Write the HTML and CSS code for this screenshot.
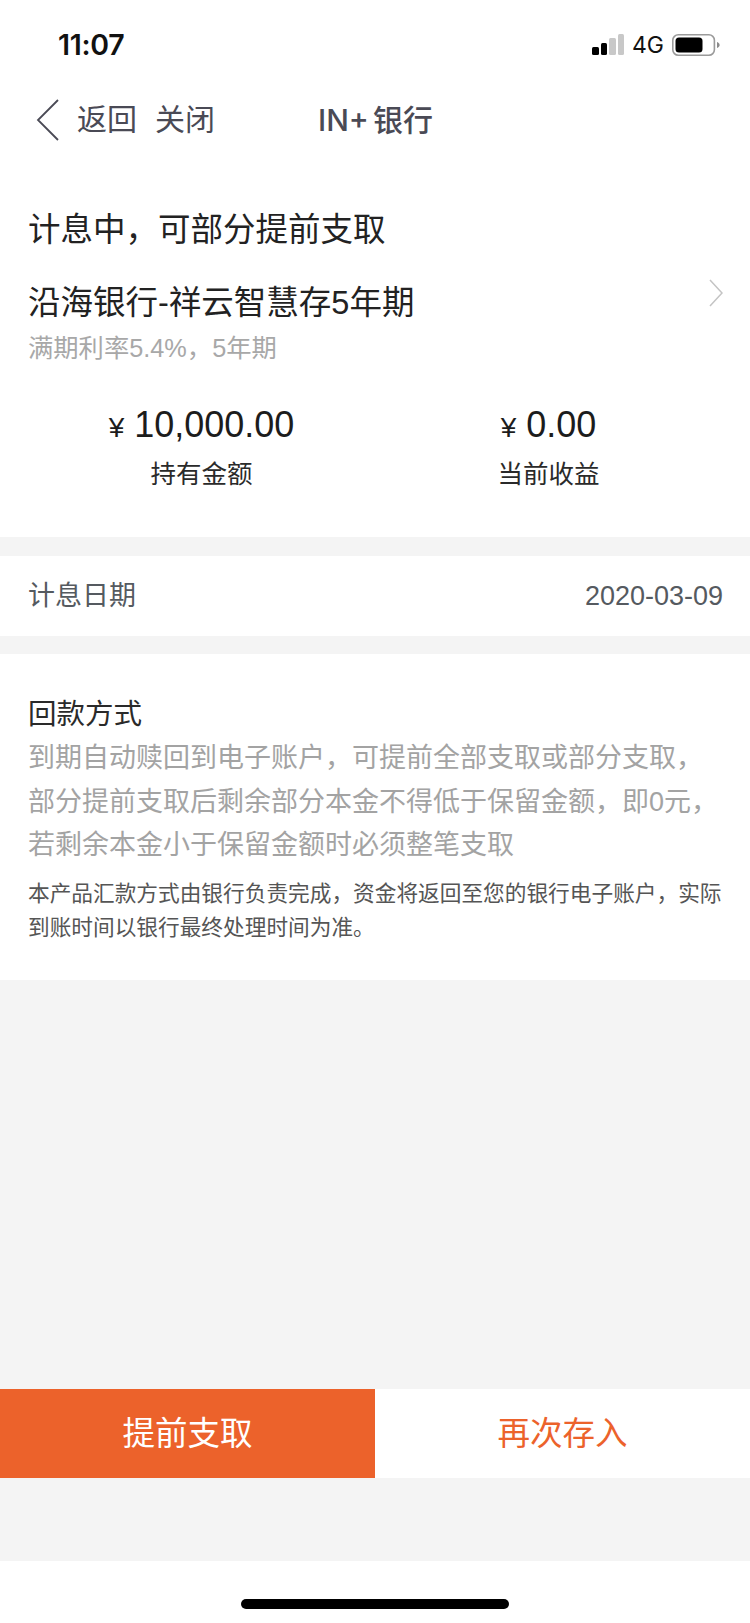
FILE: index.html
```html
<!DOCTYPE html>
<html lang="zh-CN">
<head>
<meta charset="utf-8">
<title>IN+银行</title>
<link rel="stylesheet" href="styles.css">
</head>
<body>
<div class="page">
  <div class="status">
    <span class="time">11:07</span>
    <div class="status-right">
      <div class="bars">
        <i class="bar bar1"></i><i class="bar bar2"></i><i class="bar bar3"></i><i class="bar bar4"></i>
      </div>
      <span class="net">4G</span>
      <svg class="battery" width="48" height="22" viewBox="0 0 48 22">
        <rect x="0.8" y="0.8" width="41.6" height="20.4" rx="5.5" fill="none" stroke="#9a9a9a" stroke-width="1.6"/>
        <rect x="3.5" y="3.500" width="27" height="15" rx="3.500" fill="#000"/>
        <path d="M45 8v6c1.600-.5 2.600-1.700 2.600-3s-1-2.500-2.600-3z" fill="#8a8a8a"/>
      </svg>
    </div>
  </div>
  <div class="nav">
    <svg class="back" width="24" height="44" viewBox="0 0 24 44">
      <path d="M22 2 2 22l20 20" fill="none" stroke="#4a4a55" stroke-width="1.800"/>
    </svg>
    <span class="nav-link">返回</span>
    <span class="nav-link nav-close">关闭</span>
    <span class="nav-title">IN+ 银行</span>
  </div>
  <section class="card">
    <h1 class="status-title">计息中，可部分提前支取</h1>
    <div class="name-row">
      <h2 class="name">沿海银行-祥云智慧存5年期</h2>
      <svg class="more" width="14" height="28" viewBox="0 0 14 28">
        <path d="M1 1l12 13L1 27" fill="none" stroke="#c4c4c4" stroke-width="1.500"/>
      </svg>
    </div>
    <p class="sub">满期利率5.4%，5年期</p>
    <div class="stats">
      <div class="stat">
        <div class="amount"><span class="yen">¥</span> 10,000.00</div>
        <div class="stat-label">持有金额</div>
      </div>
      <div class="stat">
        <div class="amount"><span class="yen">¥</span> 0.00</div>
        <div class="stat-label">当前收益</div>
      </div>
    </div>
  </section>
  <section class="row">
    <span class="row-label">计息日期</span>
    <span class="row-value">2020-03-09</span>
  </section>
  <section class="repay">
    <h3 class="repay-title">回款方式</h3>
    <p class="repay-text">到期自动赎回到电子账户，可提前全部支取或部分支取，<br>部分提前支取后剩余部分本金不得低于保留金额，即0元，<br>若剩余本金小于保留金额时必须整笔支取</p>
    <p class="repay-note">本产品汇款方式由银行负责完成，资金将返回至您的银行电子账户，实际到账时间以银行最终处理时间为准。</p>
  </section>
  <div class="fill"></div>
  <div class="actions">
    <button class="btn btn-primary">提前支取</button>
    <button class="btn btn-secondary">再次存入</button>
  </div>
  <div class="gap"></div>
  <div class="home"><div class="home-bar"></div></div>
</div>
</body>
</html>
```
FILE: styles.css
```css
* { box-sizing: border-box; }
html, body { margin: 0; padding: 0; }
body {
  background: #f4f4f4;
  font-family: "Liberation Sans", "Noto Sans CJK SC", sans-serif;
  color: #222;
}
h1, h2, h3, p { margin: 0; font-weight: 400; }
.page {
  width: 750px;
  height: 1623px;
  display: flex;
  flex-direction: column;
  overflow: hidden;
}
.status {
  height: 82px;
  background: #fff;
  display: flex;
  justify-content: space-between;
  align-items: flex-start;
  padding: 26px 30px 0 58px;
}
.time {
  font-size: 28.500px;
  line-height: 38px;
  font-weight: 600;
  color: #111;
  font-family: "Inter", "Liberation Sans", sans-serif;
  letter-spacing: -0.3px;
}
.status-right {
  display: flex;
  align-items: flex-start;
  padding-top: 8px;
}
.bars {
  display: flex;
  align-items: flex-end;
  gap: 2px;
  height: 21px;
  width: 32px;
}
.bar { display: block; width: 6.500px; border-radius: 1.500px; }
.bar1 { height: 8px; background: #000; }
.bar2 { height: 12px; background: #000; }
.bar3 { height: 17px; background: #c8c8c8; }
.bar4 { height: 21px; background: #c8c8c8; }
.net {
  margin-left: 8px;
  width: 40px;
  font-size: 23px;
  line-height: 22px;
  color: #111;
  font-family: "Inter", "Liberation Sans", sans-serif;
}
.battery { display: block; }
.nav {
  height: 76px;
  background: #fff;
  display: flex;
  align-items: center;
  padding-left: 36px;
  color: #4a4a55;
}
.back { margin-right: 17px; }
.nav-link { font-size: 30px; line-height: 40px; }
.nav-close { margin-left: 18px; }
.nav-title {
  margin-left: 103px;
  font-family: "Inter", "Noto Sans CJK SC", sans-serif;
  font-size: 30px;
  line-height: 40px;
  font-weight: 500;
  word-spacing: -4px;
}
.card {
  background: #fff;
  padding: 50px 28px 45px;
}
.status-title {
  font-size: 32.500px;
  line-height: 44px;
}
.name-row {
  margin-top: 29px;
  display: flex;
  justify-content: space-between;
  align-items: flex-start;
}
.name {
  font-size: 32.500px;
  line-height: 44px;
}
.more { margin: -2px -1px 0 0; }
.sub {
  margin-top: 6px;
  font-size: 25.300px;
  line-height: 34px;
  color: #a8a8a8;
}
.stats {
  margin-top: 37px;
  display: grid;
  grid-template-columns: 1fr 1fr;
}
.stat { text-align: center; }
.amount {
  font-size: 36px;
  line-height: 46px;
  color: #1c1c1c;
}
.yen { font-size: 28px; }
.stat-label {
  margin-top: 5px;
  font-size: 25.500px;
  line-height: 36px;
  color: #2a2a2a;
}
.row {
  margin-top: 19px;
  height: 80px;
  background: #fff;
  display: flex;
  justify-content: space-between;
  align-items: center;
  padding: 0 27px 0 28px;
  color: #555a60;
}
.row-label { font-size: 27px; line-height: 40px; }
.row-value { font-size: 27px; line-height: 40px; }
.repay {
  margin-top: 18px;
  background: #fff;
  padding: 40px 28px 35px;
}
.repay-title {
  font-size: 28.500px;
  line-height: 40px;
  color: #2a2a2a;
}
.repay-text {
  margin-top: 3px;
  font-size: 27px;
  line-height: 43.500px;
  color: #a3a3a3;
}
.repay-note {
  margin-top: 9px;
  font-size: 21.680px;
  line-height: 34px;
  color: #555;
}
.fill { flex: 1; }
.actions {
  height: 89px;
  display: flex;
}
.btn {
  flex: 1;
  border: 0;
  padding: 0;
  font-family: inherit;
  font-size: 32.500px;
  line-height: 44px;
}
.btn-primary { background: #ec622b; color: #fff; }
.btn-secondary { background: #fff; color: #ec622b; }
.gap { height: 83px; }
.home {
  height: 62px;
  background: #fff;
  padding-top: 38px;
  display: flex;
  justify-content: center;
}
.home-bar {
  width: 268px;
  height: 10px;
  border-radius: 5px;
  background: #000;
}
```
